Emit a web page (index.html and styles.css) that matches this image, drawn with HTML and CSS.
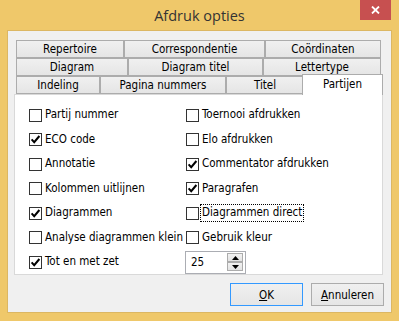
FILE: index.html
```html
<!DOCTYPE html>
<html>
<head>
<meta charset="utf-8">
<link rel="stylesheet" href="styles.css">
</head>
<body>
<div class="window">
  <div class="titlebar">
    <span class="title">Afdruk opties</span>
    <div class="close"><svg width="9" height="8" viewBox="0 0 9 8"><path d="M1 0.5 L8 7.5 M8 0.5 L1 7.5" stroke="#fff" stroke-width="1.8"/></svg></div>
  </div>
  <div class="client">
    <div class="tabctl">
      <div class="tabrow">
        <div class="tab w108">Repertoire</div>
        <div class="tab w141">Correspondentie</div>
        <div class="tab w116">Coördinaten</div>
      </div>
      <div class="tabrow">
        <div class="tab w112">Diagram</div>
        <div class="tab w135">Diagram titel</div>
        <div class="tab w118">Lettertype</div>
      </div>
      <div class="tabrow">
        <div class="tab w84">Indeling</div>
        <div class="tab w126">Pagina nummers</div>
        <div class="tab w78">Titel</div>
        <div class="tab sel">Partijen</div>
      </div>
      <div class="panel">
        <div class="cb"><span class="box"></span><span class="lbl">Partij nummer</span></div>
        <div class="cb"><span class="box"></span><span class="lbl">Toernooi afdrukken</span></div>
        <div class="cb"><span class="box"><svg width="11" height="11" viewBox="0 0 11 11"><path d="M1.6 5.4 L4.2 8.2 L9.4 2" fill="none" stroke="#000" stroke-width="2"/></svg></span><span class="lbl">ECO code</span></div>
        <div class="cb"><span class="box"></span><span class="lbl">Elo afdrukken</span></div>
        <div class="cb"><span class="box"></span><span class="lbl">Annotatie</span></div>
        <div class="cb"><span class="box"><svg width="11" height="11" viewBox="0 0 11 11"><path d="M1.6 5.4 L4.2 8.2 L9.4 2" fill="none" stroke="#000" stroke-width="2"/></svg></span><span class="lbl">Commentator afdrukken</span></div>
        <div class="cb"><span class="box"></span><span class="lbl">Kolommen uitlijnen</span></div>
        <div class="cb"><span class="box"><svg width="11" height="11" viewBox="0 0 11 11"><path d="M1.6 5.4 L4.2 8.2 L9.4 2" fill="none" stroke="#000" stroke-width="2"/></svg></span><span class="lbl">Paragrafen</span></div>
        <div class="cb"><span class="box"><svg width="11" height="11" viewBox="0 0 11 11"><path d="M1.6 5.4 L4.2 8.2 L9.4 2" fill="none" stroke="#000" stroke-width="2"/></svg></span><span class="lbl">Diagrammen</span></div>
        <div class="cb"><span class="box"></span><span class="lbl focus">Diagrammen direct</span></div>
        <div class="cb"><span class="box"></span><span class="lbl">Analyse diagrammen klein</span></div>
        <div class="cb"><span class="box"></span><span class="lbl">Gebruik kleur</span></div>
        <div class="cb"><span class="box"><svg width="11" height="11" viewBox="0 0 11 11"><path d="M1.6 5.4 L4.2 8.2 L9.4 2" fill="none" stroke="#000" stroke-width="2"/></svg></span><span class="lbl">Tot en met zet</span></div>
        <div class="spin">
          <span class="val">25</span>
          <div class="spinbtns">
            <div class="sbtn"><svg width="7" height="4" viewBox="0 0 7 4"><path d="M3.5 0 L7 4 L0 4 Z" fill="#000"/></svg></div>
            <div class="sbtn"><svg width="7" height="4" viewBox="0 0 7 4"><path d="M0 0 L7 0 L3.5 4 Z" fill="#000"/></svg></div>
          </div>
        </div>
      </div>
    </div>
    <div class="buttons">
      <div class="btn def"><span><u>O</u>K</span></div>
      <div class="btn"><span><u>A</u>nnuleren</span></div>
    </div>
  </div>
</div>
</body>
</html>
```

FILE: styles.css
```css
* { box-sizing: border-box; margin: 0; padding: 0; }
html, body { width: 399px; height: 321px; overflow: hidden; }
body {
  font-family: "DejaVu Sans Condensed", "DejaVu Sans", sans-serif;
  font-stretch: semi-condensed;
  font-size: 11.5px;
  color: #000;
  background: #efc86a;
}
.window {
  width: 399px;
  height: 321px;
  background: #efc86a;
  display: flex;
  flex-direction: column;
}
.titlebar {
  height: 31px;
  display: grid;
  grid-template-columns: 1fr auto 1fr;
  padding: 0 8px;
}
.title {
  grid-column: 2;
  align-self: center;
  font-family: "Open Sans", sans-serif;
  font-stretch: normal;
  font-size: 14.5px;
  color: #333;
  margin-top: -1px;
}
.close {
  grid-column: 3;
  justify-self: end;
  align-self: start;
  width: 31px;
  height: 20px;
  background: #c75050;
  display: flex;
  align-items: center;
  justify-content: center;
}
.client {
  margin: 0 8px;
  height: 281px;
  background: #f0f0f0;
  box-shadow: 0 0 0 1px #dcb763;
  padding: 9px 0 0 6px;
  display: flex;
  flex-direction: column;
}
.tabctl { width: 369px; }
.tabrow {
  display: flex;
  margin: 0 2px;
  height: 18px;
}
.tab {
  height: 18px;
  border: 1px solid #acacac;
  background: linear-gradient(#f0f0f0, #e5e5e5);
  display: flex;
  align-items: center;
  justify-content: center;
  white-space: nowrap;
}
.w108 { width: 108px; }
.w141 { width: 141px; }
.w116 { width: 116px; }
.w112 { width: 112px; }
.w135 { width: 135px; }
.w118 { width: 118px; }
.w84 { width: 84px; }
.w126 { width: 126px; }
.w78 { width: 78px; }
.tab.sel {
  width: 81px;
  height: 21px;
  margin: -2px -2px -1px -2px;
  background: #fff;
  border-bottom: none;
  position: relative;
  z-index: 1;
  align-items: flex-start;
  padding-top: 2px;
}
.panel {
  height: 181px;
  border: 1px solid #d9d9d9;
  background: #fff;
  padding: 8px 0 0 14px;
  display: grid;
  grid-template-columns: 157px 1fr;
  grid-auto-rows: 24.5px;
}
.cb {
  display: flex;
  align-items: center;
  gap: 2px;
  white-space: nowrap;
}
.box {
  width: 13px;
  height: 13px;
  border: 1px solid #333;
  background: #fff;
  display: flex;
  flex: none;
}
.lbl {
  padding: 1px 1px 2px 1px;
  line-height: 13px;
}
.focus { outline: 1px dotted #000; outline-offset: 0; }
.spin {
  width: 61px;
  height: 23px;
  margin-left: -1px;
  align-self: center;
  border: 1px solid #abadb3;
  background: #fff;
  display: flex;
  align-items: center;
  justify-content: space-between;
  padding: 0 2px 0 5px;
}
.spinbtns {
  display: flex;
  flex-direction: column;
  gap: 0;
}
.sbtn {
  width: 16px;
  height: 9px;
  border: 1px solid #acacac;
  background: linear-gradient(#f2f2f2, #e3e3e3);
  display: flex;
  align-items: center;
  justify-content: center;
}
.buttons {
  margin-top: 8px;
  display: flex;
  justify-content: flex-end;
  gap: 8px;
  padding-right: 7px;
}
.btn {
  width: 73px;
  height: 23px;
  border: 1px solid #acacac;
  background: linear-gradient(#f0f0f0, #e5e5e5);
  display: flex;
  align-items: center;
  justify-content: center;
}
.btn.def { border-color: #3399ff; }
.btn u { text-decoration: underline; text-underline-offset: 1px; }
```
